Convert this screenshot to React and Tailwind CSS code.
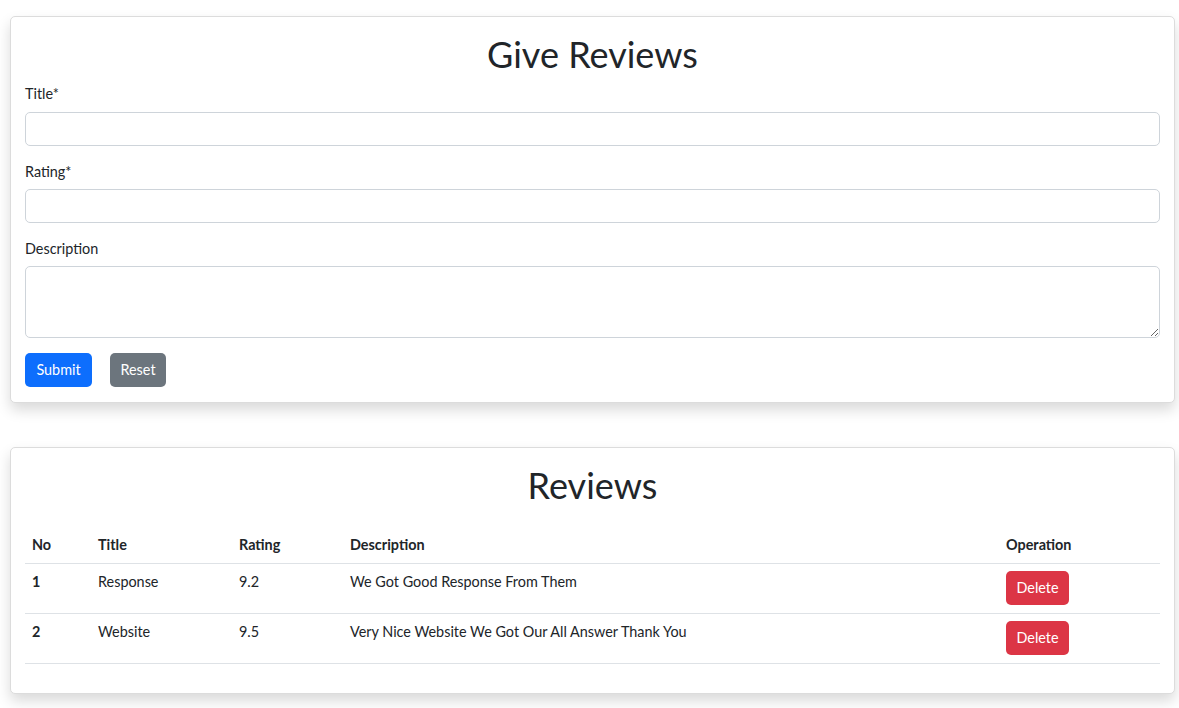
import React, { useState } from "react";

const reviews = [
  { no: 1, title: "Response", rating: "9.2", description: "We Got Good Response From Them" },
  { no: 2, title: "Website", rating: "9.5", description: "Very Nice Website We Got Our All Answer Thank You" },
];

const inputCls =
  "block w-full h-[34px] rounded-[5px] border border-[#ced4da] bg-white px-[11px] text-[14.4px] text-[#212529] outline-none focus:border-[#86b7fe]";

const App = () => {
  const [form, setForm] = useState({ title: "", rating: "", description: "" });

  const update = (e) => setForm({ ...form, [e.target.name]: e.target.value });
  const reset = () => setForm({ title: "", rating: "", description: "" });

  return (
    <div
      className="min-h-[708px] bg-white pt-[16px] pb-[16px] text-[14.4px] leading-[1.5] text-[#212529]"
      style={{ fontFamily: "Lato, 'Noto Sans', sans-serif" }}
    >
      {/* Form card */}
      <div className="ml-[10px] w-[1165px] rounded-[5px] border border-[#dcdcdc] bg-white px-[14px] pt-[16px] pb-[15px] shadow-[0_7px_14px_rgba(0,0,0,0.15)]">
        <h1 className="mb-[7px] text-center text-[36px] leading-[1.2] font-normal">Give Reviews</h1>
        <form onSubmit={(e) => e.preventDefault()}>
          <div className="mb-[15px]">
            <label className="mb-[7px] block">Title*</label>
            <input name="title" value={form.title} onChange={update} className={inputCls} />
          </div>
          <div className="mb-[15px]">
            <label className="mb-[7px] block">Rating*</label>
            <input name="rating" value={form.rating} onChange={update} className={inputCls} />
          </div>
          <div className="mb-[15px]">
            <label className="mb-[6px] block">Description</label>
            <textarea
              name="description"
              value={form.description}
              onChange={update}
              className="block h-[72px] w-full resize-y rounded-[5px] border border-[#ced4da] bg-white px-[11px] py-[5px] text-[14.4px] outline-none"
            />
          </div>
          <div className="flex gap-[18px]">
            <button
              type="submit"
              className="h-[34px] w-[67px] rounded-[5px] bg-[#0d6efd] text-[14.4px] text-white"
            >
              Submit
            </button>
            <button
              type="button"
              onClick={reset}
              className="h-[34px] w-[56px] rounded-[5px] bg-[#6c757d] text-[14.4px] text-white"
            >
              Reset
            </button>
          </div>
        </form>
      </div>

      {/* Reviews card */}
      <div className="mt-[44px] ml-[10px] w-[1165px] rounded-[5px] border border-[#dcdcdc] bg-white px-[14px] pt-[16px] pb-[14px] shadow-[0_7px_14px_rgba(0,0,0,0.15)]">
        <h1 className="text-center text-[36px] leading-[1.2] font-normal">Reviews</h1>
        <table className="mt-[20px] mb-[15px] w-full border-collapse text-left">
          <thead>
            <tr className="border-b border-[#dee2e6]">
              <th className="w-[66px] px-[7px] py-[7px] font-bold">No</th>
              <th className="w-[141px] px-[7px] py-[7px] font-bold">Title</th>
              <th className="w-[111px] px-[7px] py-[7px] font-bold">Rating</th>
              <th className="w-[656px] px-[7px] py-[7px] font-bold">Description</th>
              <th className="px-[7px] py-[7px] font-bold">Operation</th>
            </tr>
          </thead>
          <tbody>
            {reviews.map((r) => (
              <tr key={r.no} className="border-b border-[#dee2e6] align-top">
                <th className="px-[7px] pt-[7px] pb-[8px] font-bold">{r.no}</th>
                <td className="px-[7px] pt-[7px] pb-[8px]">{r.title}</td>
                <td className="px-[7px] pt-[7px] pb-[8px]">{r.rating}</td>
                <td className="px-[7px] pt-[7px] pb-[8px]">{r.description}</td>
                <td className="px-[7px] pt-[7px] pb-[8px]">
                  <button className="h-[34px] w-[63px] rounded-[5px] bg-[#dc3545] text-[14.4px] text-white">
                    Delete
                  </button>
                </td>
              </tr>
            ))}
          </tbody>
        </table>
      </div>
    </div>
  );
};

export default App;
